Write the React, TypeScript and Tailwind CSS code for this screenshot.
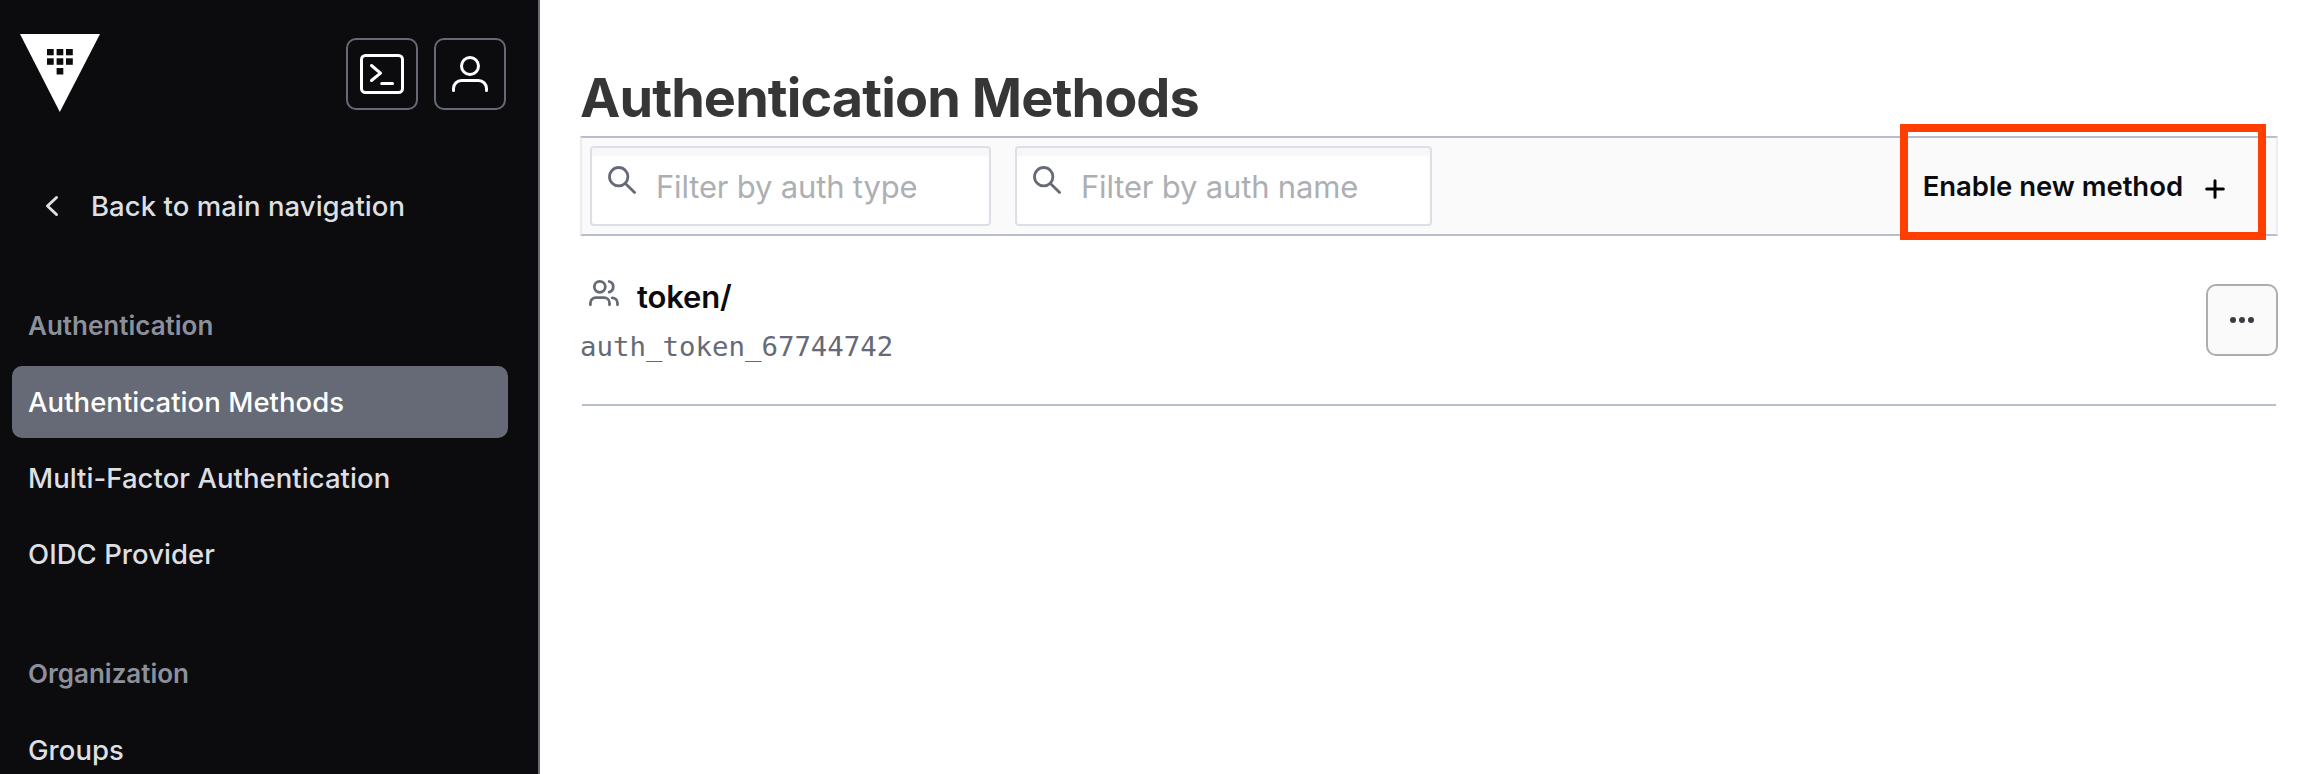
type NavItem = { label: string; active?: boolean };
type NavGroup = { title: string; items: NavItem[] };

const groups: NavGroup[] = [
  {
    title: "Authentication",
    items: [
      { label: "Authentication Methods", active: true },
      { label: "Multi-Factor Authentication" },
      { label: "OIDC Provider" },
    ],
  },
  { title: "Organization", items: [{ label: "Groups" }] },
];

function VaultLogo() {
  return (
    <svg className="-mt-1 h-[78px] w-[80px]" viewBox="0 0 80 78">
      <path d="M0 0H80L39.8 78Z" fill="#fff" />
      <g fill="#0c0c0e">
        <rect x="27" y="15" width="6.7" height="6.3" />
        <rect x="36.6" y="15" width="6.7" height="6.3" />
        <rect x="46" y="15" width="6.8" height="6.3" />
        <rect x="27" y="24.3" width="6.7" height="6.5" />
        <rect x="36.6" y="24.3" width="6.7" height="6.5" />
        <rect x="46" y="24.3" width="6.8" height="6.5" />
        <rect x="36.6" y="34" width="6.7" height="6.5" />
      </g>
    </svg>
  );
}

function TerminalIcon() {
  return (
    <svg className="size-12" viewBox="0 0 48 48" fill="none" stroke="#fff" strokeWidth="3" strokeLinecap="round" strokeLinejoin="round">
      <rect x="3.5" y="5.5" width="41" height="37" rx="4" />
      <path d="M13.5 15.5L22.5 23.2L13.5 30.5M23.7 33.5H34.5" />
    </svg>
  );
}

function UserIcon() {
  return (
    <svg className="size-12" viewBox="0 0 48 48" fill="none" stroke="#fff" strokeWidth="3" strokeLinecap="round">
      <circle cx="24" cy="16" r="8.5" />
      <path d="M7.5 40.5V38.5a8 8 0 0 1 8-8h17a8 8 0 0 1 8 8v2" />
    </svg>
  );
}

function SearchIcon() {
  return (
    <svg className="pointer-events-none absolute left-[18px] top-5 size-[30px]" viewBox="0 0 30 30" fill="none" stroke="#656a76" strokeWidth="2.8" strokeLinecap="round">
      <circle cx="10.7" cy="10.7" r="9.2" />
      <path d="M17.4 17.4L26.6 26.6" />
    </svg>
  );
}

function UsersIcon() {
  return (
    <svg className="ml-2 mt-[10px] size-8 shrink-0" viewBox="0 0 32 32" fill="none" stroke="#656a76" strokeWidth="2.8" strokeLinecap="round">
      <circle cx="11.8" cy="8.8" r="5.5" />
      <path d="M2.4 26.8V25a5.4 5.4 0 0 1 5.4-5.4h8.3a5.4 5.4 0 0 1 5.4 5.4v1.8" />
      <path d="M21.2 3.5a5.5 5.5 0 0 1 0 10.6" />
      <path d="M24.2 19.8a5.4 5.4 0 0 1 5.3 5.2v1.8" />
    </svg>
  );
}

function FilterInput({ placeholder, className }: { placeholder: string; className: string }) {
  return (
    <div className={`relative h-20 ${className}`}>
      <input
        placeholder={placeholder}
        className="h-20 w-full rounded-[4px] border-2 border-[#dce0e6] bg-white pl-[64px] text-[31px] tracking-[-0.18px] shadow-[inset_0_8px_2px_rgba(10,10,10,0.03)] placeholder:text-[#adafb3]"
      />
      <SearchIcon />
    </div>
  );
}

function Sidebar() {
  return (
    <aside className="h-full w-[540px] shrink-0 border-r-2 border-[#656a76] bg-[#0c0c0e] pt-[38px] text-[27.5px] font-medium text-[#dedfe3]">
      <header className="flex h-[72px] items-start justify-between pl-5 pr-8">
        <VaultLogo />
        <div className="flex gap-4">
          <button className="flex size-[72px] items-center justify-center rounded-[10px] border-2 border-[#656a76]">
            <TerminalIcon />
          </button>
          <button className="flex size-[72px] items-center justify-center rounded-[10px] border-2 border-[#656a76]">
            <UserIcon />
          </button>
        </div>
      </header>

      <nav className="mt-[60px] flex flex-col gap-12 pl-3 pr-[30px]">
        <a className="flex h-[72px] items-center gap-[32px] pl-[33px] tracking-[0.06px]">
          <svg className="h-[22px] w-[14px]" viewBox="0 0 14 22" fill="none" stroke="currentColor" strokeWidth="3" strokeLinecap="round" strokeLinejoin="round">
            <path d="M11.5 2.5L2.5 11L11.5 19.5" />
          </svg>
          <span className="pt-[2px]">Back to main navigation</span>
        </a>
        {groups.map((group) => (
          <section key={group.title} className="flex flex-col gap-1">
            <h2 className="flex h-[72px] items-center pb-[2px] pl-4 text-[26px] font-semibold text-[#8c909c]">
              {group.title}
            </h2>
            {group.items.map((item) => (
              <a
                key={item.label}
                className={`flex h-[72px] items-center rounded-[10px] pl-4 pt-[2px] tracking-[0.05px] ${item.active ? "bg-[#656a76] text-white" : ""}`}
              >
                {item.label}
              </a>
            ))}
          </section>
        ))}
      </nav>
    </aside>
  );
}

export default function App() {
  return (
    <div className="flex h-[774px] w-[2312px] overflow-hidden bg-white font-['Inter',sans-serif]">
      <Sidebar />
      <main className="flex-1 pl-10 pr-[34px] pt-16">
        <h1 className="h-[72px] text-[54px] font-bold leading-[67px] tracking-[-0.9px] text-[#363636]">
          Authentication Methods
        </h1>

        <div className="relative flex h-[100px] items-center border-2 border-x-[#ebecf2] border-y-[#babdcc] bg-[#fafafa] pl-2">
          <FilterInput placeholder="Filter by auth type" className="w-[401px]" />
          <FilterInput placeholder="Filter by auth name" className="ml-6 w-[417px]" />
          <button className="ml-auto mr-[51px] flex items-center gap-[22px] text-[27.5px] font-semibold tracking-[-0.04px] text-[#0c0c0e]">
            <span className="pt-[2px]">Enable new method</span>
            <svg className="mt-[5px] size-5" viewBox="0 0 20 20" fill="none" stroke="#000" strokeWidth="3" strokeLinecap="round">
              <path d="M10 1.7V18.3M1.7 10H18.3" />
            </svg>
          </button>
          <div className="pointer-events-none absolute -top-[14px] right-[10px] h-[116px] w-[366px] border-8 border-[#ff3e00]" />
        </div>

        <div className="mx-[2px] flex h-[170px] items-start justify-between border-b-2 border-[#babfcc]">
          <div className="-ml-[2px] pt-8">
            <div className="flex h-[56px] items-start">
              <UsersIcon />
              <span className="ml-[17px] text-[31px] font-semibold leading-[58px] tracking-[-0.15px] text-[#0c0c0e]">token/</span>
            </div>
            <code className="block font-['DejaVu_Sans_Mono',monospace] text-[27.4px] leading-[46px] text-[#656a76]">
              auth_token_67744742
            </code>
          </div>
          <button className="-mr-[2px] mt-12 flex size-[72px] items-center justify-center rounded-[10px] border-2 border-[#adadad] bg-[#fafafa]">
            <svg className="h-2 w-6" viewBox="0 0 24 8" fill="#3b3d45">
              <circle cx="3" cy="4" r="3" />
              <circle cx="12" cy="4" r="3" />
              <circle cx="21" cy="4" r="3" />
            </svg>
          </button>
        </div>
      </main>
    </div>
  );
}
